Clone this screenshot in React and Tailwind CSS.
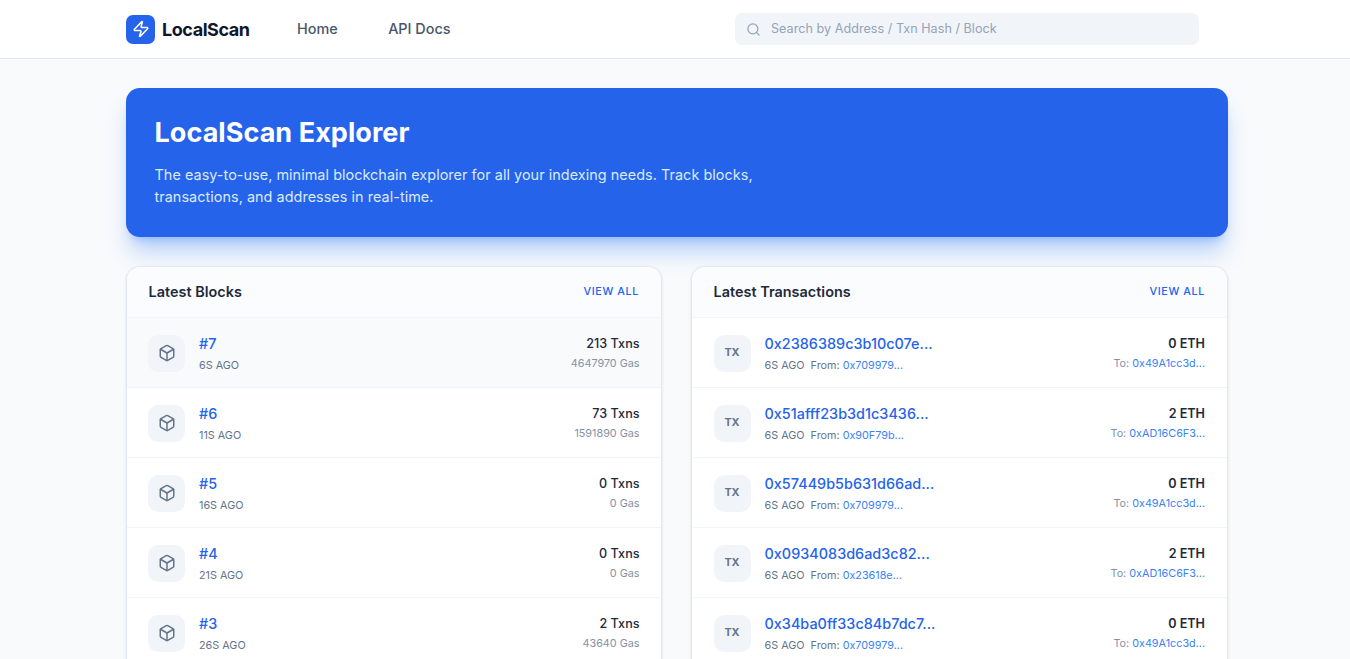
import { Box, Search, Zap } from 'lucide-react'

const blocks = [
  { num: '#7', age: '6S AGO', txns: '213 Txns', gas: '4647970 Gas' },
  { num: '#6', age: '11S AGO', txns: '73 Txns', gas: '1591890 Gas' },
  { num: '#5', age: '16S AGO', txns: '0 Txns', gas: '0 Gas' },
  { num: '#4', age: '21S AGO', txns: '0 Txns', gas: '0 Gas' },
  { num: '#3', age: '26S AGO', txns: '2 Txns', gas: '43640 Gas' },
]

const txs = [
  { hash: '0x2386389c3b10c07e...', from: '0x709979...', value: '0 ETH', to: '0x49A1cc3d...' },
  { hash: '0x51afff23b3d1c3436...', from: '0x90F79b...', value: '2 ETH', to: '0xAD16C6F3...' },
  { hash: '0x57449b5b631d66ad...', from: '0x709979...', value: '0 ETH', to: '0x49A1cc3d...' },
  { hash: '0x0934083d6ad3c82...', from: '0x23618e...', value: '2 ETH', to: '0xAD16C6F3...' },
  { hash: '0x34ba0ff33c84b7dc7...', from: '0x709979...', value: '0 ETH', to: '0x49A1cc3d...' },
]

function Card({ title, children }) {
  return (
    <section className="overflow-hidden rounded-t-[14px] border border-[#e2e8f0] bg-white shadow-sm">
      <div className="flex h-[51px] items-center justify-between border-b border-[#f1f5f9] bg-[#fbfcfe] pr-[22px] pl-[21.5px]">
        <h2 className="text-[14.4px] font-semibold tracking-[0.03px] text-[#1e293b]">{title}</h2>
        <a className="text-[10.8px] font-medium tracking-[0.6px] text-[#2563eb]">VIEW ALL</a>
      </div>
      {children}
    </section>
  )
}

function BlockRow({ block, first }) {
  return (
    <div className={`flex h-[69.9px] items-center border-b border-[#f1f5f9] pr-[21.5px] pl-[21px] ${first ? 'bg-[#f8fafc]' : ''}`}>
      <div className="mt-[2px] flex h-[37px] w-[37px] items-center justify-center rounded-[10px] bg-[#f1f5f9] text-[#64748b]">
        <Box size={18} />
      </div>
      <div className="ml-[14px] flex-1 pt-[2px]">
        <div className="text-[14.4px] leading-[21px] font-medium text-[#2563eb]">{block.num}</div>
        <div className="mt-[4px] text-[10.8px] leading-[16px] text-[#64748b]">{block.age}</div>
      </div>
      <div className="pt-[2px] text-right">
        <div className="text-[12.6px] leading-[19px] font-medium text-[#1e293b]">{block.txns}</div>
        <div className="mt-[3px] text-[10.8px] leading-[16px] text-[#8491a5]">{block.gas}</div>
      </div>
    </div>
  )
}

function TxRow({ tx }) {
  return (
    <div className="flex h-[69.9px] items-center border-b border-[#f1f5f9] pr-[22px] pl-[21.5px]">
      <div className="mt-[2px] flex h-[37px] w-[37px] items-center justify-center rounded-[10px] bg-[#f1f5f9] text-[10.8px] font-bold text-[#64748b]">
        TX
      </div>
      <div className="ml-[14px] flex-1 pt-[2px]">
        <div className="text-[14.4px] leading-[21px] font-medium tracking-[0.02px] text-[#2563eb]">{tx.hash}</div>
        <div className="mt-[4px] text-[10.8px] leading-[16px] text-[#64748b]">
          6S AGO <span className="ml-[3px] text-[#64748b]">From:</span>{' '}
          <span className="text-[#3b82f6]">{tx.from}</span>
        </div>
      </div>
      <div className="pt-[2px] text-right">
        <div className="text-[12.6px] leading-[19px] font-semibold text-[#1e293b]">{tx.value}</div>
        <div className="mt-[3px] text-[10.8px] leading-[16px] text-[#8491a5]">
          To: <span className="text-[#3b82f6]">{tx.to}</span>
        </div>
      </div>
    </div>
  )
}

export default function App() {
  return (
    <div className="h-screen overflow-hidden bg-[#f8fafc] font-['Inter',sans-serif]">
      <header className="h-[59px] border-b border-[#e2e8f0] bg-white">
        <div className="ml-[126px] flex h-[58px] w-[1102px] items-center">
          <div className="flex h-[29px] w-[29px] items-center justify-center rounded-[7px] bg-[#2563eb] text-white">
            <Zap size={18} />
          </div>
          <span className="ml-[7px] text-[18px] font-bold tracking-[-0.45px] text-[#0f172a]">LocalScan</span>
          <nav className="ml-[47.5px] flex gap-[50.5px] text-[14.4px] font-medium text-[#475569]">
            <a>Home</a>
            <a>API Docs</a>
          </nav>
          <div className="ml-[285px] flex h-[32px] w-[464px] items-center rounded-[7px] bg-[#f1f5f9] pl-[10.5px] text-[#94a3b8]">
            <Search size={15} />
            <span className="ml-[10px] text-[12.6px] tracking-[0.03px]">Search by Address / Txn Hash / Block</span>
          </div>
        </div>
      </header>

      <main className="ml-[126px] w-[1102px] pt-[29px]">
        <div className="h-[149px] rounded-[14px] bg-[#2563eb] px-[28.5px] pt-[29px] text-white shadow-[0_18px_22.5px_-4.5px_rgba(59,130,246,0.35),0_7px_9px_-5.4px_rgba(59,130,246,0.35)]">
          <h1 className="text-[27px] leading-[32px] font-bold tracking-[0.05px]">LocalScan Explorer</h1>
          <p className="mt-[15px] w-[640px] text-[14.4px] leading-[22px] tracking-[0.05px] text-[#dbeafe]">
            The easy-to-use, minimal blockchain explorer for all your indexing needs. Track blocks, transactions, and
            addresses in real-time.
          </p>
        </div>

        <div className="mt-[29px] grid grid-cols-[536px_537px] gap-[29px]">
          <Card title="Latest Blocks">
            {blocks.map((b, i) => (
              <BlockRow key={b.num} block={b} first={i === 0} />
            ))}
          </Card>
          <Card title="Latest Transactions">
            {txs.map((t) => (
              <TxRow key={t.hash} tx={t} />
            ))}
          </Card>
        </div>
      </main>
    </div>
  )
}
